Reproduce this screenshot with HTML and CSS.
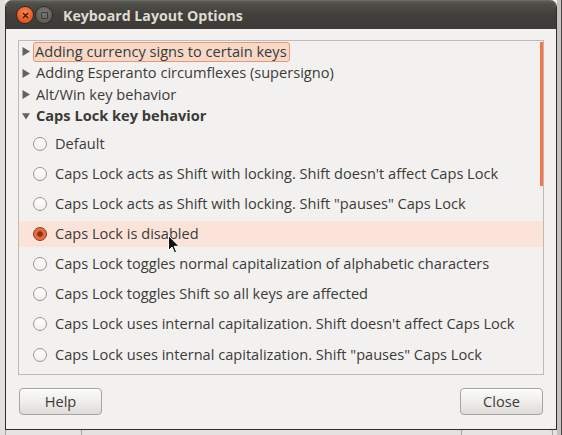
FILE: index.html
```html
<!DOCTYPE html>
<html>
<head>
<meta charset="utf-8">
<link rel="stylesheet" href="styles.css">
</head>
<body>
<div class="desk">
  <div class="window">
    <div class="titlebar">
      <span class="wbtn close">
        <svg width="7" height="7" viewBox="0 0 7 7"><path d="M1 1L6 6M6 1L1 6" stroke="#3a1a0c" stroke-width="1.4" fill="none"/></svg>
      </span>
      <span class="wbtn maxi"><span class="sq"></span></span>
      <span class="title">Keyboard Layout Options</span>
    </div>
    <div class="content">
      <div class="frame">
        <div class="scroll"></div>
        <div class="exp-row">
          <svg class="arrow" width="8" height="9" viewBox="0 0 8 9"><polygon points="0.5,0 8,4.5 0.5,9" fill="#64625e"/></svg>
          <span class="label focus">Adding currency signs to certain keys</span>
        </div>
        <div class="exp-row">
          <svg class="arrow" width="8" height="9" viewBox="0 0 8 9"><polygon points="0.5,0 8,4.5 0.5,9" fill="#64625e"/></svg>
          <span class="label">Adding Esperanto circumflexes (supersigno)</span>
        </div>
        <div class="exp-row">
          <svg class="arrow" width="8" height="9" viewBox="0 0 8 9"><polygon points="0.5,0 8,4.5 0.5,9" fill="#64625e"/></svg>
          <span class="label">Alt/Win key behavior</span>
        </div>
        <div class="exp-row">
          <svg class="arrow" width="8" height="8" viewBox="0 0 9 8"><polygon points="0,1 9,1 4.5,8" fill="#64625e"/></svg>
          <span class="label bold">Caps Lock key behavior</span>
        </div>
        <div class="radios">
          <div class="radio-row"><div class="radio-inner"><span class="radio"></span><span class="rtext">Default</span></div></div>
          <div class="radio-row"><div class="radio-inner"><span class="radio"></span><span class="rtext">Caps Lock acts as Shift with locking. Shift doesn't affect Caps Lock</span></div></div>
          <div class="radio-row"><div class="radio-inner"><span class="radio"></span><span class="rtext">Caps Lock acts as Shift with locking. Shift "pauses" Caps Lock</span></div></div>
          <div class="radio-row"><div class="radio-inner selected"><span class="radio on"></span><span class="rtext">Caps Lock is disabled</span></div></div>
          <div class="radio-row"><div class="radio-inner"><span class="radio"></span><span class="rtext">Caps Lock toggles normal capitalization of alphabetic characters</span></div></div>
          <div class="radio-row"><div class="radio-inner"><span class="radio"></span><span class="rtext">Caps Lock toggles Shift so all keys are affected</span></div></div>
          <div class="radio-row"><div class="radio-inner"><span class="radio"></span><span class="rtext">Caps Lock uses internal capitalization. Shift doesn't affect Caps Lock</span></div></div>
          <div class="radio-row"><div class="radio-inner"><span class="radio"></span><span class="rtext">Caps Lock uses internal capitalization. Shift "pauses" Caps Lock</span></div></div>
        </div>
      </div>
      <div class="buttons">
        <button class="btn">Help</button>
        <button class="btn">Close</button>
      </div>
    </div>
  </div>
  <div class="under">
    <span class="ubtn ub-help">Help</span>
    <span class="ubtn ub-close">Close</span>
  </div>
  <svg class="cursor" width="12" height="19" viewBox="0 0 12 19">
    <path d="M0.5 0.5 L0.5 15.5 L4 12 L6.5 17.8 L8.6 16.9 L6.2 11.3 L11 11.3 Z" fill="#111" stroke="#fff" stroke-width="1"/>
  </svg>
</div>
</body>
</html>
```
FILE: styles.css
```css
* { box-sizing: border-box; }
html, body { margin: 0; padding: 0; }
body {
  width: 562px;
  height: 435px;
  overflow: hidden;
  font-family: "Open Sans", "Noto Sans", sans-serif;
  font-size: 14.6px;
  color: #3c3b37;
}
.desk {
  position: relative;
  width: 562px;
  height: 435px;
  background: linear-gradient(to right, #e2e0dc 0, #e2e0dc 5px, #f2f1f0 5px, #f2f1f0 557px, #c4c2be 557px, #c4c2be 561px, #4a4945 561px);
}
.window {
  margin-left: 5px;
  width: 552px;
  height: 430px;
  display: flex;
  flex-direction: column;
  border-left: 1px solid #2e2d2a;
  border-right: 1px solid #2e2d2a;
  border-bottom: 1px solid #2e2d2a;
  border-radius: 7px 7px 0 0;
  background: #f2f1f0;
  overflow: hidden;
}
.titlebar {
  height: 29px;
  flex: none;
  display: flex;
  align-items: center;
  padding-left: 11px;
  background: linear-gradient(to bottom, #5f5d57 0, #4f4d48 3px, #403f3b 14px, #3c3b37 29px);
  border-top: 1px solid #6b6963;
}
.wbtn {
  width: 16px;
  height: 16px;
  border-radius: 50%;
  display: flex;
  align-items: center;
  justify-content: center;
  flex: none;
}
.close {
  background: radial-gradient(circle at 50% 35%, #f98a58 0, #f0652b 45%, #d5460f 100%);
  box-shadow: 0 0 0 1px #2c2b28;
}
.maxi {
  margin-left: 3px;
  background: radial-gradient(circle at 50% 35%, #7a7873 0, #64625d 55%, #55534f 100%);
  box-shadow: 0 0 0 1px #2c2b28;
}
.sq {
  width: 7px;
  height: 7px;
  border: 1.5px solid #3a3935;
  border-radius: 1px;
}
.title {
  margin-left: 11px;
  font-weight: bold;
  font-size: 14.2px;
  color: #dfdbd2;
  white-space: nowrap;
}
.content {
  flex: 1;
  display: flex;
  flex-direction: column;
  padding: 11px 12px 13px 12px;
}
.frame {
  position: relative;
  height: 335px;
  flex: none;
  border: 1px solid #bebbb6;
  background: #f2f1f0;
  overflow: hidden;
}
.scroll {
  position: absolute;
  right: 0;
  top: 1px;
  width: 3px;
  height: 144px;
  background: #f37644;
}
.exp-row {
  height: 21.5px;
  display: flex;
  align-items: center;
  padding-left: 3px;
  white-space: nowrap;
}
.arrow { flex: none; margin-right: 4px; }
.label {
  padding: 0 1px 1px 1px;
  border: 1px solid transparent;
  line-height: 17px;
}
.label.focus {
  background: #f6d8c9;
  border-color: #ec9673;
  border-radius: 3px;
  margin-left: -1px;
  padding-right: 2px;
}
.label.bold { font-weight: bold; }
.radios { margin-top: 1px; }
.radio-row {
  height: 30.15px;
  padding: 3px 0 2px 0;
}
.radio-inner {
  height: 100%;
  display: flex;
  align-items: center;
  padding-left: 14px;
  white-space: nowrap;
}
.radio-inner.selected { background: #fce3da; }
.radio {
  width: 14px;
  height: 14px;
  border-radius: 50%;
  border: 1px solid #9a9792;
  background: linear-gradient(to bottom, #ffffff, #f1efed);
  flex: none;
  margin-right: 8px;
}
.radio.on {
  border-color: #8a3a1c;
  background: radial-gradient(circle, #8e2f10 0, #8e2f10 2.4px, #e4693a 3.2px, #ef7a4b 100%);
}
.rtext { line-height: 18px; padding-bottom: 2px; }
.buttons {
  margin-top: 13px;
  display: flex;
  justify-content: space-between;
}
.btn {
  width: 83px;
  height: 27px;
  font-family: "Open Sans", "Noto Sans", sans-serif;
  font-size: 14.6px;
  color: #3c3b37;
  border: 1px solid #a7a49f;
  border-radius: 4px;
  background: linear-gradient(to bottom, #fbfbfa 0, #efeeec 50%, #dddbd7 100%);
  box-shadow: inset 0 1px 0 #ffffff;
  padding: 0 0 1px 0;
  margin-left: 1px;
}
.btn + .btn { margin-left: 0; margin-right: 1px; }
.under {
  height: 5px;
  position: relative;
  overflow: hidden;
  margin-left: 5px;
  width: 552px;
  background: #e4e2de;
}
.ubtn {
  position: absolute;
  top: -2px;
  height: 20px;
  border: 1px solid #a7a49f;
  border-bottom: none;
  border-radius: 4px 4px 0 0;
  background: #e6e4e0;
  font-size: 14.6px;
  line-height: 22px;
  text-align: center;
  color: #3c3b37;
}
.ub-help { left: 0; width: 77px; padding-left: 20px; text-align: left; }
.ub-close { left: 456px; width: 92px; }
.cursor {
  position: absolute;
  left: 168px;
  top: 235px;
}
```
